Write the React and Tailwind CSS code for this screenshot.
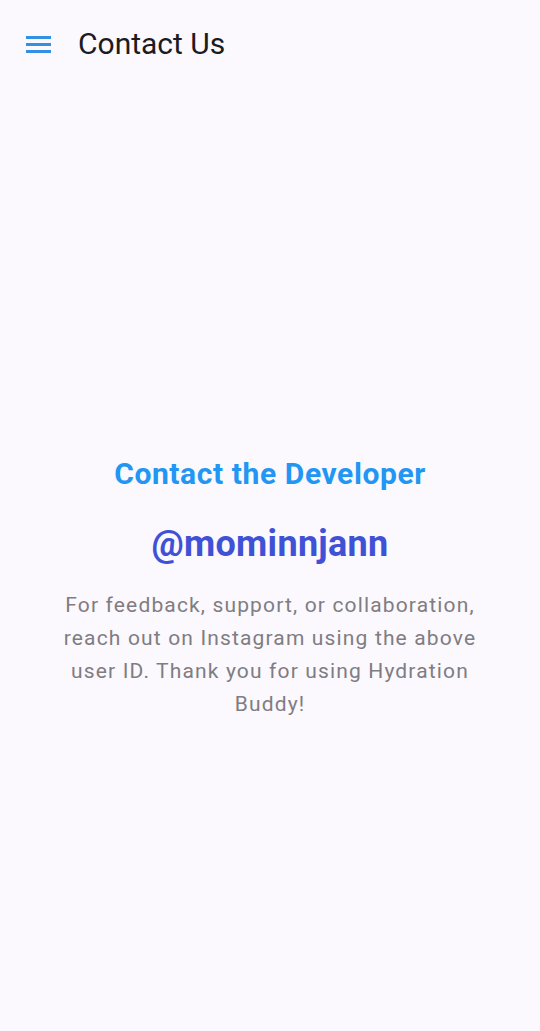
export default function App() {
  return (
    <div
      className="w-[540px] h-[1031px] bg-[#fbf8fe] flex flex-col"
      style={{ fontFamily: "Roboto, 'Noto Sans', sans-serif" }}
    >
      <header className="h-[88px] flex items-center pl-[26px] shrink-0">
        <svg width="25" height="17" viewBox="0 0 25 17" className="mr-[27px]">
          <rect x="0" y="0" width="25" height="3" fill="#3490e2" />
          <rect x="0" y="7" width="25" height="3" fill="#3490e2" />
          <rect x="0" y="14" width="25" height="3" fill="#3490e2" />
        </svg>
        <h1 className="text-[30px] text-[#1c1b1f] leading-none m-0">Contact Us</h1>
      </header>

      <main className="flex-1 flex flex-col items-center pt-[368px] px-[50px] text-center">
        <h2 className="text-[30px] font-bold text-[#2196f3] leading-[36px] tracking-[0.6px] m-0">
          Contact the Developer
        </h2>
        <div className="mt-[32px] text-[36px] font-bold text-[#3f51d5] leading-[40px] tracking-[0.3px]">
          @mominnjann
        </div>
        <p className="mt-[25px] text-[21px] text-[#7f7d82] leading-[33px] tracking-[1.15px] max-w-[430px] m-0">
          For feedback, support, or collaboration, reach out on Instagram using the above user ID. Thank you for using Hydration Buddy!
        </p>
      </main>
    </div>
  );
}
